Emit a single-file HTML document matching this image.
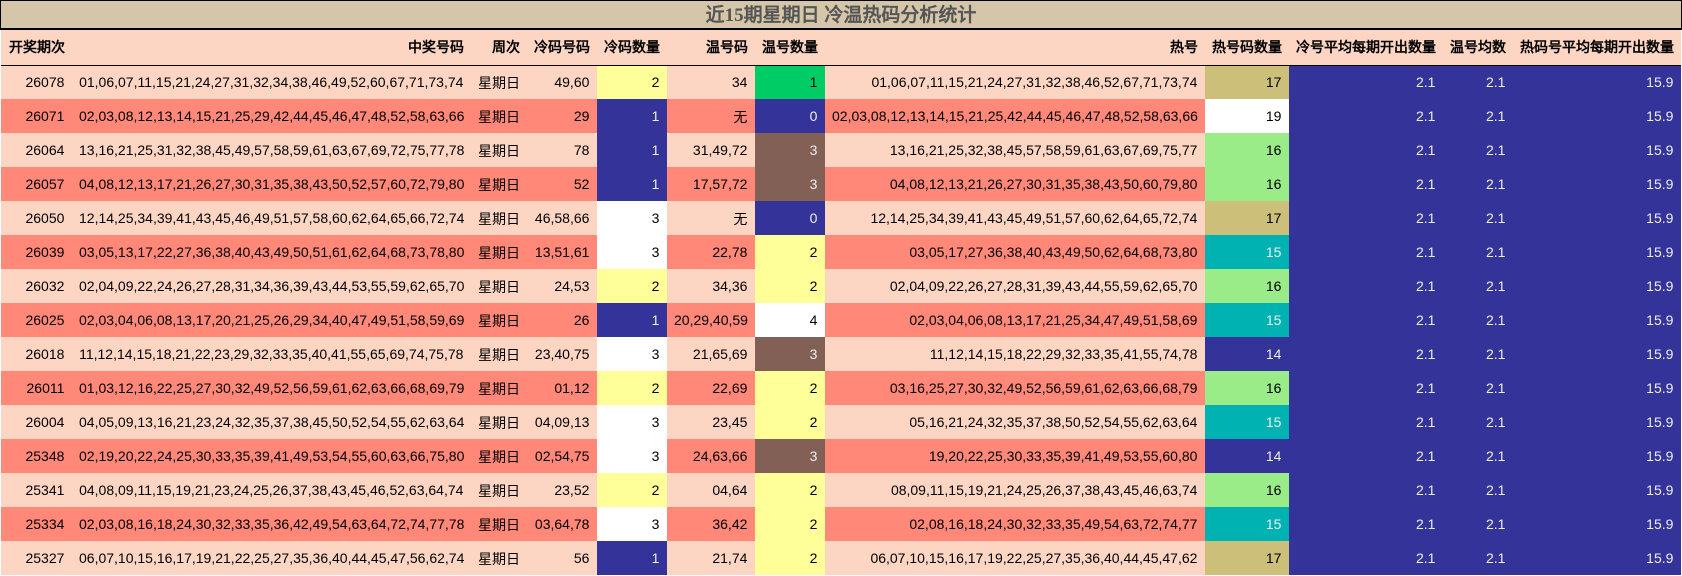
<!DOCTYPE html>
<html><head><meta charset="utf-8">
<style>
html,body{margin:0;padding:0;background:#fff;width:1682px;height:576px;overflow:hidden}
body{font-family:"Liberation Sans","WenQuanYi Zen Hei",sans-serif;font-size:14px;color:#000}
#t{position:absolute;left:0;top:0;width:1680px;height:27px;border:1px solid #000;border-bottom-width:2px;background:#d6c6a9;text-align:center;font:bold 19px/29px "Liberation Serif","WenQuanYi Zen Hei",serif;color:#555}
table{position:absolute;left:1px;top:30px;width:1680px;table-layout:fixed;border-collapse:collapse}
td,th{padding:0 7px;text-align:right;white-space:nowrap;overflow:visible;height:34px;box-sizing:border-box;font-size:14px;font-weight:normal}
td{padding-right:7.6px}
th{font-weight:bold;background:#fcd5c3;border-bottom:1px solid #000;height:35px}
i{font-style:normal;position:relative;top:1px}
tr.a td{background:#fcd5c3}
tr.b td{background:#ff8878}
tr td.n{background:#333399;color:#eee}
tr td.y{background:#ffff99}
tr td.w{background:#fff}
tr td.g{background:#00cc66}
tr td.r{background:#826055;color:#eee}
tr td.k{background:#ccbf7a}
tr td.l{background:#99ec88}
tr td.c{background:#00b2b2;color:#eee}
</style></head><body>
<div id="t">近15期星期日 冷温热码分析统计</div>
<table>
<colgroup><col style="width:71px"><col style="width:399px"><col style="width:56px"><col style="width:70px"><col style="width:70px"><col style="width:88px"><col style="width:70px"><col style="width:380px"><col style="width:84px"><col style="width:154px"><col style="width:70px"><col style="width:168px"></colgroup>
<tr><th>开奖期次</th><th>中奖号码</th><th>周次</th><th>冷码号码</th><th>冷码数量</th><th>温号码</th><th>温号数量</th><th>热号</th><th>热号码数量</th><th>冷号平均每期开出数量</th><th>温号均数</th><th>热码号平均每期开出数量</th></tr>
<tr class="a"><td>26078</td><td>01,06,07,11,15,21,24,27,31,32,34,38,46,49,52,60,67,71,73,74</td><td><i>星期日</i></td><td>49,60</td><td class="y">2</td><td>34</td><td class="g">1</td><td>01,06,07,11,15,21,24,27,31,32,38,46,52,67,71,73,74</td><td class="k">17</td><td class="n">2.1</td><td class="n">2.1</td><td class="n">15.9</td></tr>
<tr class="b"><td>26071</td><td>02,03,08,12,13,14,15,21,25,29,42,44,45,46,47,48,52,58,63,66</td><td><i>星期日</i></td><td>29</td><td class="n">1</td><td><i>无</i></td><td class="n">0</td><td>02,03,08,12,13,14,15,21,25,42,44,45,46,47,48,52,58,63,66</td><td class="w">19</td><td class="n">2.1</td><td class="n">2.1</td><td class="n">15.9</td></tr>
<tr class="a"><td>26064</td><td>13,16,21,25,31,32,38,45,49,57,58,59,61,63,67,69,72,75,77,78</td><td><i>星期日</i></td><td>78</td><td class="n">1</td><td>31,49,72</td><td class="r">3</td><td>13,16,21,25,32,38,45,57,58,59,61,63,67,69,75,77</td><td class="l">16</td><td class="n">2.1</td><td class="n">2.1</td><td class="n">15.9</td></tr>
<tr class="b"><td>26057</td><td>04,08,12,13,17,21,26,27,30,31,35,38,43,50,52,57,60,72,79,80</td><td><i>星期日</i></td><td>52</td><td class="n">1</td><td>17,57,72</td><td class="r">3</td><td>04,08,12,13,21,26,27,30,31,35,38,43,50,60,79,80</td><td class="l">16</td><td class="n">2.1</td><td class="n">2.1</td><td class="n">15.9</td></tr>
<tr class="a"><td>26050</td><td>12,14,25,34,39,41,43,45,46,49,51,57,58,60,62,64,65,66,72,74</td><td><i>星期日</i></td><td>46,58,66</td><td class="w">3</td><td><i>无</i></td><td class="n">0</td><td>12,14,25,34,39,41,43,45,49,51,57,60,62,64,65,72,74</td><td class="k">17</td><td class="n">2.1</td><td class="n">2.1</td><td class="n">15.9</td></tr>
<tr class="b"><td>26039</td><td>03,05,13,17,22,27,36,38,40,43,49,50,51,61,62,64,68,73,78,80</td><td><i>星期日</i></td><td>13,51,61</td><td class="w">3</td><td>22,78</td><td class="y">2</td><td>03,05,17,27,36,38,40,43,49,50,62,64,68,73,80</td><td class="c">15</td><td class="n">2.1</td><td class="n">2.1</td><td class="n">15.9</td></tr>
<tr class="a"><td>26032</td><td>02,04,09,22,24,26,27,28,31,34,36,39,43,44,53,55,59,62,65,70</td><td><i>星期日</i></td><td>24,53</td><td class="y">2</td><td>34,36</td><td class="y">2</td><td>02,04,09,22,26,27,28,31,39,43,44,55,59,62,65,70</td><td class="l">16</td><td class="n">2.1</td><td class="n">2.1</td><td class="n">15.9</td></tr>
<tr class="b"><td>26025</td><td>02,03,04,06,08,13,17,20,21,25,26,29,34,40,47,49,51,58,59,69</td><td><i>星期日</i></td><td>26</td><td class="n">1</td><td>20,29,40,59</td><td class="w">4</td><td>02,03,04,06,08,13,17,21,25,34,47,49,51,58,69</td><td class="c">15</td><td class="n">2.1</td><td class="n">2.1</td><td class="n">15.9</td></tr>
<tr class="a"><td>26018</td><td>11,12,14,15,18,21,22,23,29,32,33,35,40,41,55,65,69,74,75,78</td><td><i>星期日</i></td><td>23,40,75</td><td class="w">3</td><td>21,65,69</td><td class="r">3</td><td>11,12,14,15,18,22,29,32,33,35,41,55,74,78</td><td class="n">14</td><td class="n">2.1</td><td class="n">2.1</td><td class="n">15.9</td></tr>
<tr class="b"><td>26011</td><td>01,03,12,16,22,25,27,30,32,49,52,56,59,61,62,63,66,68,69,79</td><td><i>星期日</i></td><td>01,12</td><td class="y">2</td><td>22,69</td><td class="y">2</td><td>03,16,25,27,30,32,49,52,56,59,61,62,63,66,68,79</td><td class="l">16</td><td class="n">2.1</td><td class="n">2.1</td><td class="n">15.9</td></tr>
<tr class="a"><td>26004</td><td>04,05,09,13,16,21,23,24,32,35,37,38,45,50,52,54,55,62,63,64</td><td><i>星期日</i></td><td>04,09,13</td><td class="w">3</td><td>23,45</td><td class="y">2</td><td>05,16,21,24,32,35,37,38,50,52,54,55,62,63,64</td><td class="c">15</td><td class="n">2.1</td><td class="n">2.1</td><td class="n">15.9</td></tr>
<tr class="b"><td>25348</td><td>02,19,20,22,24,25,30,33,35,39,41,49,53,54,55,60,63,66,75,80</td><td><i>星期日</i></td><td>02,54,75</td><td class="w">3</td><td>24,63,66</td><td class="r">3</td><td>19,20,22,25,30,33,35,39,41,49,53,55,60,80</td><td class="n">14</td><td class="n">2.1</td><td class="n">2.1</td><td class="n">15.9</td></tr>
<tr class="a"><td>25341</td><td>04,08,09,11,15,19,21,23,24,25,26,37,38,43,45,46,52,63,64,74</td><td><i>星期日</i></td><td>23,52</td><td class="y">2</td><td>04,64</td><td class="y">2</td><td>08,09,11,15,19,21,24,25,26,37,38,43,45,46,63,74</td><td class="l">16</td><td class="n">2.1</td><td class="n">2.1</td><td class="n">15.9</td></tr>
<tr class="b"><td>25334</td><td>02,03,08,16,18,24,30,32,33,35,36,42,49,54,63,64,72,74,77,78</td><td><i>星期日</i></td><td>03,64,78</td><td class="w">3</td><td>36,42</td><td class="y">2</td><td>02,08,16,18,24,30,32,33,35,49,54,63,72,74,77</td><td class="c">15</td><td class="n">2.1</td><td class="n">2.1</td><td class="n">15.9</td></tr>
<tr class="a"><td>25327</td><td>06,07,10,15,16,17,19,21,22,25,27,35,36,40,44,45,47,56,62,74</td><td><i>星期日</i></td><td>56</td><td class="n">1</td><td>21,74</td><td class="y">2</td><td>06,07,10,15,16,17,19,22,25,27,35,36,40,44,45,47,62</td><td class="k">17</td><td class="n">2.1</td><td class="n">2.1</td><td class="n">15.9</td></tr>
</table>
</body></html>
